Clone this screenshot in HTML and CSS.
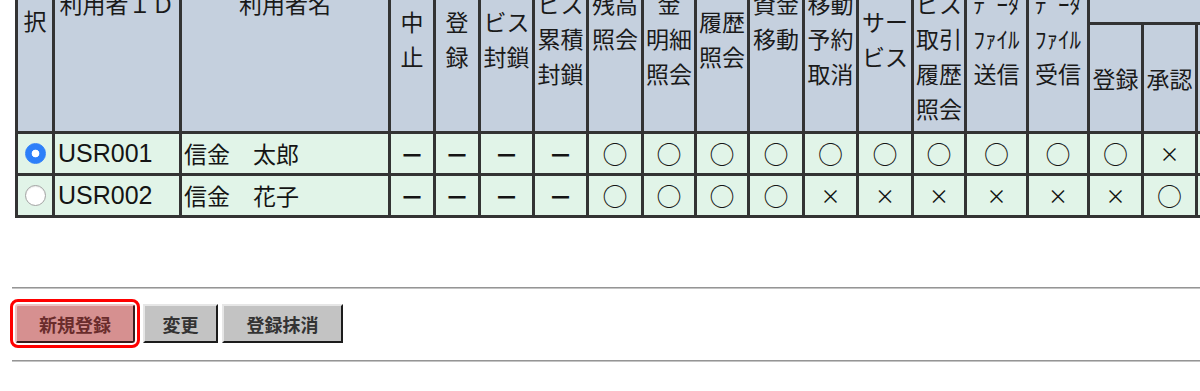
FILE: index.html
```html
<!DOCTYPE html>
<html lang="ja">
<head>
<meta charset="utf-8">
<title>利用者一覧</title>
<link rel="stylesheet" href="styles.css">
</head>
<body>
<div class="table-wrap">
<table class="perm">
<colgroup>
<col class="c37"><col class="c127"><col class="c209"><col class="c45"><col class="c45"><col class="c54"><col class="c54"><col class="c55"><col class="c53"><col class="c53"><col class="c55"><col class="c54"><col class="c55"><col class="c53"><col class="c62"><col class="c61"><col class="c54"><col class="c54"><col class="c54"><col class="c54">
</colgroup>
<thead>
<tr class="row-a">
<th rowspan="3">選<br>択</th>
<th rowspan="3">利用者ＩＤ</th>
<th rowspan="3">利用者名</th>
<th colspan="13">サービス利用権限</th>
<th colspan="4">取引権限</th>
</tr>
<tr class="row-b">
<th rowspan="2">中<br>止</th>
<th rowspan="2">登<br>録</th>
<th rowspan="2">ビス<br>封鎖</th>
<th rowspan="2">ビス<br>累積<br>封鎖</th>
<th rowspan="2">残高<br>照会<br>&nbsp;</th>
<th rowspan="2">金<br>明細<br>照会</th>
<th rowspan="2">履歴<br>照会</th>
<th rowspan="2">資金<br>移動<br>&nbsp;</th>
<th rowspan="2">移動<br>予約<br>取消</th>
<th rowspan="2">サー<br>ビス</th>
<th rowspan="2">サー<br>ビス<br>取引<br>履歴<br>照会</th>
<th rowspan="2">ﾃﾞｰﾀ<br>ﾌｧｲﾙ<br>送信</th>
<th rowspan="2">ﾃﾞｰﾀ<br>ﾌｧｲﾙ<br>受信</th>
<th colspan="4">振込振替</th>
</tr>
<tr class="row-c">
<th>登録</th>
<th>承認</th>
<th>登録</th>
<th>承認</th>
</tr>
</thead>
<tbody>
<tr class="data">
<td><input type="radio" name="sel" class="radio" checked></td>
<td class="left uid">USR001</td>
<td class="left">信金　太郎</td>
<td class="dash">－</td><td class="dash">－</td><td class="dash">－</td><td class="dash">－</td>
<td class="o">○</td><td class="o">○</td><td class="o">○</td><td class="o">○</td><td class="o">○</td><td class="o">○</td><td class="o">○</td><td class="o">○</td><td class="o">○</td><td class="o">○</td>
<td class="x">×</td><td class="o">○</td><td class="o">○</td>
</tr>
<tr class="data">
<td><input type="radio" name="sel" class="radio"></td>
<td class="left uid">USR002</td>
<td class="left">信金　花子</td>
<td class="dash">－</td><td class="dash">－</td><td class="dash">－</td><td class="dash">－</td>
<td class="o">○</td><td class="o">○</td><td class="o">○</td><td class="o">○</td>
<td class="x">×</td><td class="x">×</td><td class="x">×</td><td class="x">×</td><td class="x">×</td><td class="x">×</td>
<td class="o">○</td><td class="o">○</td><td class="o">○</td>
</tr>
</tbody>
</table>
</div>

<div class="rule rule-top"></div>

<div class="actions">
<button type="button" class="btn btn-new">新規登録</button>
<button type="button" class="btn btn-edit">変更</button>
<button type="button" class="btn btn-del">登録抹消</button>
</div>

<div class="rule rule-bottom"></div>
</body>
</html>
```

FILE: styles.css
```css
* {
  box-sizing: border-box;
}

html,
body {
  margin: 0;
  padding: 0;
  background: #ffffff;
}

body {
  font-family: "Noto Sans CJK JP", "Noto Sans", sans-serif;
  color: #1a1a1a;
  overflow: hidden;
}

.table-wrap {
  overflow: hidden;
  width: 100%;
}

.perm {
  table-layout: fixed;
  width: 1291px;
  border-collapse: separate;
  border-spacing: 0;
  margin: -128px 0 0 15px;
  border-top: 3px solid #333333;
  border-left: 3px solid #333333;
  font-size: 23px;
}

.c37 { width: 37px; }
.c127 { width: 127px; }
.c209 { width: 209px; }
.c45 { width: 45px; }
.c53 { width: 53px; }
.c54 { width: 54px; }
.c55 { width: 55px; }
.c61 { width: 61px; }
.c62 { width: 62px; }

.perm th,
.perm td {
  border-right: 3px solid #333333;
  border-bottom: 3px solid #333333;
  padding: 0 2px;
  white-space: nowrap;
  overflow: hidden;
}

.perm th {
  background: #c5d0de;
  font-weight: normal;
  line-height: 35px;
  vertical-align: middle;
  text-align: center;
  color: #1a1a1a;
}

.row-a { height: 71px; }
.row-b { height: 79px; }
.row-c { height: 109px; }

.data { height: 42px; }

.perm td {
  background: #e1f4e8;
  line-height: 1;
  text-align: center;
  vertical-align: middle;
  color: #141414;
}

.perm td.left {
  text-align: left;
  padding-left: 2px;
}

.perm td.uid {
  font-family: "Liberation Sans", "Noto Sans CJK JP", sans-serif;
  font-size: 25px;
  padding-left: 3px;
}

.perm td.dash {
  font-weight: bold;
  font-size: 24px;
}

.perm td.o {
  font-size: 25px;
}

.perm td.x {
  font-size: 20px;
}

.radio {
  appearance: none;
  -webkit-appearance: none;
  display: block;
  width: 21px;
  height: 21px;
  margin: 0 auto;
  border-radius: 50%;
  border: 1px solid #a2a2a2;
  background: #ffffff;
  box-shadow: inset 0 1px 1px rgba(0, 0, 0, 0.08);
}

.radio:checked {
  border-color: #2d7ff9;
  background: radial-gradient(circle, #ffffff 0 3.5px, #2d7ff9 4.2px);
  box-shadow: none;
}

.rule {
  height: 2px;
  margin-left: 12px;
  border-top: 1px solid #959595;
  border-bottom: 1px solid #c4c4c4;
}

.rule-top {
  margin-top: 69px;
}

.rule-bottom {
  margin-top: 17px;
}

.actions {
  display: flex;
  align-items: flex-start;
  padding-left: 15px;
  margin-top: 15px;
}

.btn {
  height: 39px;
  padding: 0;
  margin: 0 4px 0 0;
  font-family: "Noto Sans CJK JP", "Noto Sans", sans-serif;
  font-size: 18px;
  font-weight: bold;
  color: #333333;
  background: #c3c3c3;
  border: 2px solid;
  border-color: #e6e6e6 #1c1c1c #1c1c1c #e6e6e6;
  border-radius: 0;
}

.btn-new {
  width: 120px;
  margin-right: 8px;
  background: #d69090;
  color: #6a2c2c;
  border-color: #ecc4c4 #3a1c1c #3a1c1c #ecc4c4;
  border-radius: 3px;
  outline: 3px solid #ff0000;
  outline-offset: 2px;
}

.btn-edit {
  width: 75px;
}

.btn-del {
  width: 121px;
}
```
